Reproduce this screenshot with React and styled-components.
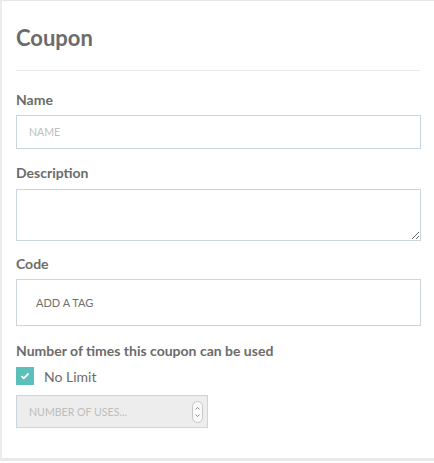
import React from 'react'
import styled, { createGlobalStyle } from 'styled-components'

const GlobalStyle = createGlobalStyle`
    body {
        margin: 0;
        background: #fff;
        font-family: Lato, "Open Sans", sans-serif;
    }
`;

const Card = styled.div`
    width: 440px;
    box-sizing: border-box;
    background: #fff;
    border-top: 1px solid #e6e6e6;
    border-left: 2px solid #ececec;
    border-bottom: 3px solid #e9e9e9;
    padding: 0 0 30px 14px;
`;

const Header = styled.div`
    margin-right: 20px;
    padding: 24px 0 19px;
    border-bottom: 1px solid #e8e8e8;
`;

const Title = styled.h2`
    margin: 0;
    font-size: 22px;
    line-height: 26px;
    font-weight: 700;
    color: #6b6b6b;
`;

const Form = styled.div`
    display: flex;
    flex-direction: column;
    padding-top: 20px;
    width: 405px;
`;

const Field = styled.div`
    display: flex;
    flex-direction: column;
    margin-bottom: ${({ $gap }) => $gap ?? 15}px;
`;

const Label = styled.label`
    font-size: 14px;
    line-height: 17px;
    font-weight: 700;
    color: #6b6b6b;
    margin-bottom: ${({ $gap }) => $gap ?? 7}px;
`;

const TextInput = styled.input`
    box-sizing: border-box;
    height: 34px;
    width: 100%;
    border: 1px solid #c9d6df;
    border-radius: 0;
    padding: 0 12px;
    font-family: Lato, sans-serif;
    font-size: 10.6px;
    color: #666;
    outline: none;
    &::placeholder {
        color: #bdbdbd;
        text-transform: uppercase;
    }
`;

const TextArea = styled.textarea`
    box-sizing: border-box;
    height: 52px;
    width: 100%;
    border: 1px solid #c9d6df;
    border-radius: 0;
    padding: 8px 12px;
    font-family: Lato, sans-serif;
    font-size: 12px;
    outline: none;
    resize: vertical;
    display: block;
`;

const TagBox = styled.div`
    box-sizing: border-box;
    height: 47px;
    border: 1px solid #c9d6df;
    display: flex;
    align-items: center;
    padding: 0 19px;
`;

const TagInput = styled.span`
    font-size: 11px;
    color: #6f6f6f;
    text-transform: uppercase;
`;

const CheckRow = styled.div`
    display: flex;
    align-items: center;
    gap: 10px;
    height: 18px;
    margin-bottom: 10px;
`;

const CheckBox = styled.span`
    width: 18px;
    height: 18px;
    background: ${({ $checked }) => ($checked ? '#5bbfba' : '#fff')};
    display: flex;
    align-items: center;
    justify-content: center;
`;

const CheckText = styled.span`
    font-size: 14px;
    color: #6b6b6b;
`;

const NumberBox = styled.div`
    box-sizing: border-box;
    width: 192px;
    height: 33px;
    border: 1px solid #c9d6df;
    background: #ededed;
    display: flex;
    align-items: center;
    padding: 0 4px 0 12px;
`;

const NumberInput = styled.input`
    flex: 1;
    min-width: 0;
    border: none;
    background: transparent;
    font-family: Lato, sans-serif;
    font-size: 10.6px;
    outline: none;
    padding: 0;
    &::placeholder {
        color: #bdbdbd;
    }
`;

const Spinner = () => (
    <svg width="11" height="22" viewBox="0 0 11 22">
        <rect x="0.5" y="0.5" width="10" height="21" rx="5" fill="#fafafa" stroke="#c4c4c4" />
        <path d="M3.5 8.5 L5.5 6.5 L7.5 8.5" fill="none" stroke="#8a8a8a" strokeWidth="1" />
        <path d="M3.5 13.5 L5.5 15.5 L7.5 13.5" fill="none" stroke="#8a8a8a" strokeWidth="1" />
    </svg>
);

const Check = () => (
    <svg width="10" height="8" viewBox="0 0 10 8">
        <path d="M1.5 4.2 L3.8 6.3 L8.5 1.5" fill="none" stroke="#fff" strokeWidth="1.8" />
    </svg>
);

const App = () => {
    return (
        <>
            <GlobalStyle />
            <Card>
                <Header>
                    <Title>Coupon</Title>
                </Header>
                <Form>
                    <Field>
                        <Label>Name</Label>
                        <TextInput placeholder="Name" />
                    </Field>
                    <Field $gap={14}>
                        <Label $gap={8}>Description</Label>
                        <TextArea />
                    </Field>
                    <Field $gap={16}>
                        <Label>Code</Label>
                        <TagBox>
                            <TagInput>Add a tag</TagInput>
                        </TagBox>
                    </Field>
                    <Field $gap={0}>
                        <Label $gap={8}>Number of times this coupon can be used</Label>
                        <CheckRow>
                            <CheckBox $checked>
                                <Check />
                            </CheckBox>
                            <CheckText>No Limit</CheckText>
                        </CheckRow>
                        <NumberBox>
                            <NumberInput placeholder="NUMBER OF USES..." disabled />
                            <Spinner />
                        </NumberBox>
                    </Field>
                </Form>
            </Card>
        </>
    );
};

export default App
